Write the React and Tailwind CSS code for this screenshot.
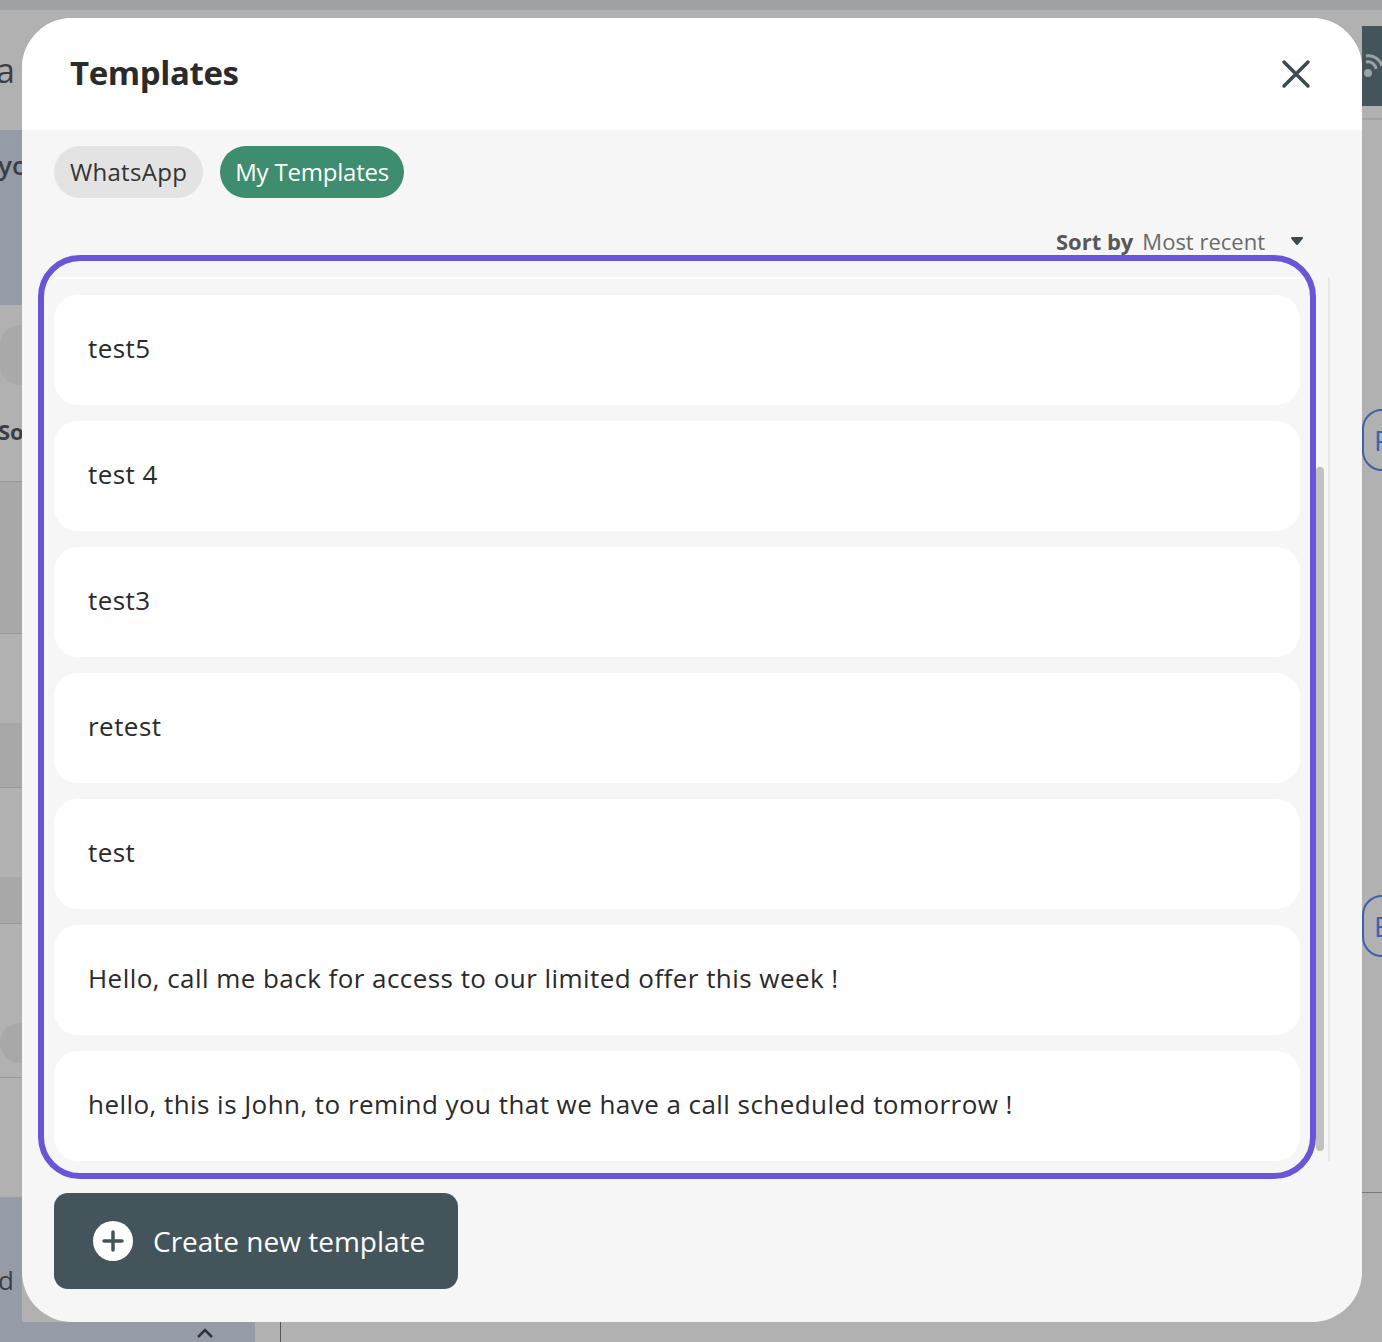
import React from 'react';

const templates = [
  'test5',
  'test 4',
  'test3',
  'retest',
  'test',
  'Hello, call me back for access to our limited offer this week !',
  'hello, this is John, to remind you that we have a call scheduled tomorrow !',
];

const font = { fontFamily: '"Open Sans", "Noto Sans", sans-serif' };

// Page behind the dialog, dimmed by the overlay
const Backdrop = () => (
  <div className="absolute inset-0 flex flex-col bg-[#b1b1b1]">
    <div className="h-[10px] bg-[#a0a1a3]" />
    <div className="flex flex-1">
      <div className="flex w-[22px] flex-col text-[#3b3f44]">
        <div className="flex h-[120px] items-center text-[34px] leading-none">
          <span className="-ml-[4px]">a</span>
        </div>
        <div className="flex h-[175px] items-start bg-[#959ca8] pt-[22px] text-[26px] font-semibold leading-none">
          <span className="-ml-[2px]">yo</span>
        </div>
        <div className="flex h-[160px] flex-col">
          <div className="mt-[20px] h-[60px] w-[40px] rounded-full bg-[#a9a9a9]" />
          <span className="-ml-[2px] mt-[35px] text-[22px] font-bold leading-none">So</span>
        </div>
        <div className="mt-[16px] h-[152px] border-t border-[#9a9a9a] bg-[#a8a8a8]" />
        <div className="h-[90px] border-t border-[#9a9a9a]" />
        <div className="h-[64px] bg-[#a8a8a8]" />
        <div className="h-[90px] border-t border-[#9a9a9a]" />
        <div className="h-[46px] bg-[#a8a8a8]" />
        <div className="h-[100px] border-t border-[#9a9a9a]" />
        <div className="h-[40px] rounded-l-full bg-[#a8a8a8]" />
        <div className="mt-[14px] h-[120px] border-t border-[#9a9a9a]" />
        <div className="flex flex-1 items-start bg-[#959ca8] pt-[70px] text-[26px] leading-none">
          <span className="-ml-[2px]">d</span>
        </div>
      </div>
      <div className="flex flex-1 flex-col">
        <div className="flex-1" />
        <div className="flex h-[20px]">
          <div className="flex w-[233px] justify-end bg-[#959ca8] pr-[40px]">
            <svg width="20" height="14" viewBox="0 0 20 14" className="mt-[4px]">
              <path d="M3 11l7-7 7 7" fill="none" stroke="#2f3539" strokeWidth="2.5" />
            </svg>
          </div>
          <div className="ml-[25px] w-px bg-[#555]" />
        </div>
      </div>
      <div className="flex w-[20px] flex-col">
        <div className="mt-[16px] flex h-[80px] items-center bg-[#44545b]">
          <svg width="20" height="40" viewBox="0 0 20 40">
            <path d="M4 10a14 14 0 0 1 16 10M4 16a8 8 0 0 1 10 7" fill="none" stroke="#9aa3a6" strokeWidth="3" />
            <circle cx="6" cy="27" r="4" fill="#9aa3a6" />
          </svg>
        </div>
        <div className="mt-[12px] h-[20px] border-t-2 border-[#a3a3a3]" />
        <div className="mt-[271px] h-[62px] w-[40px] rounded-full border-2 border-[#3d62a8] pl-[10px] text-[28px] leading-[58px] text-[#3d62a8]">F</div>
        <div className="mt-[424px] h-[62px] w-[40px] rounded-full border-2 border-[#3d62a8] pl-[10px] text-[28px] leading-[58px] text-[#3d62a8]">B</div>
        <div className="mt-[196px] h-[40px] border-b border-[#777]" />
      </div>
    </div>
  </div>
);

const PlusIcon = () => (
  <svg width="40" height="40" viewBox="0 0 40 40">
    <circle cx="20" cy="20" r="20" fill="#fff" />
    <path d="M20 11v18M11 20h18" stroke="#44545b" strokeWidth="3.5" strokeLinecap="round" />
  </svg>
);

export default function App() {
  return (
    <div className="relative h-[1342px] w-[1382px] overflow-hidden" style={font}>
      <Backdrop />

      {/* dialog */}
      <div className="absolute left-[22px] top-[18px] flex h-[1304px] w-[1340px] flex-col overflow-hidden rounded-[50px] bg-[#f6f6f6]">
        <div className="flex h-[112px] shrink-0 items-center justify-between bg-white pl-[48px] pr-[48px]">
          <h2 className="mt-[-2px] text-[33px] font-bold tracking-[-0.4px] text-[#2b2b2b]">Templates</h2>
          <svg width="32" height="32" viewBox="0 0 32 32" className="mr-[2px]">
            <path d="M4 4l24 24M28 4L4 28" stroke="#3d4b51" strokeWidth="3.5" strokeLinecap="round" />
          </svg>
        </div>

        <div className="flex gap-[17px] px-[32px] pt-[16px]">
          <button className="h-[52px] rounded-full bg-[#e3e3e3] px-[16px] text-[24px] tracking-[0.3px] text-[#333]">WhatsApp</button>
          <button className="h-[52px] rounded-full bg-[#3f8d6f] px-[15px] text-[24px] tracking-[-0.2px] text-white">My Templates</button>
        </div>

        <div className="mt-[32px] flex items-center justify-end gap-[9px] pr-[58px] text-[22px] leading-none">
          <span className="font-bold text-[#585858]">Sort by</span>
          <span className="text-[#6a6a6a]">Most recent</span>
          <svg width="14" height="10" viewBox="0 0 14 10" className="ml-[16px]">
            <path d="M2 2h10l-5 6z" fill="#3d4b51" stroke="#3d4b51" strokeWidth="2" strokeLinejoin="round" />
          </svg>
        </div>

        {/* list with its scrollbar and highlight ring */}
        <div className="relative ml-[32px] mt-[25px] flex h-[884px] w-[1276px]">
          <div className="flex flex-1 flex-col gap-[16px] border-t-2 border-white pt-[16px]">
            {templates.map((t) => (
              <div key={t} className="flex h-[110px] shrink-0 items-center rounded-[24px] bg-white pb-[3px] pl-[34px] text-[26px] tracking-[0.45px] text-[#2a2a2a]">
                {t}
              </div>
            ))}
          </div>
          <div className="ml-[16px] flex w-[14px] border-r-2 border-[#e6e6ec]">
            <div className="mt-[190px] mb-[10px] w-[8px] rounded-full bg-[#c1c1c1]" />
          </div>
          <div className="pointer-events-none absolute -left-[16px] -top-[22px] h-[924px] w-[1278px] rounded-[42px] border-[6px] border-[#6a55d8]" />
        </div>

        <div className="px-[32px] pt-[32px]">
          <button className="flex h-[96px] w-[404px] items-center gap-[20px] rounded-[14px] bg-[#44545b] pl-[39px] text-[28px] text-white">
            <PlusIcon />
            Create new template
          </button>
        </div>
      </div>
    </div>
  );
}
